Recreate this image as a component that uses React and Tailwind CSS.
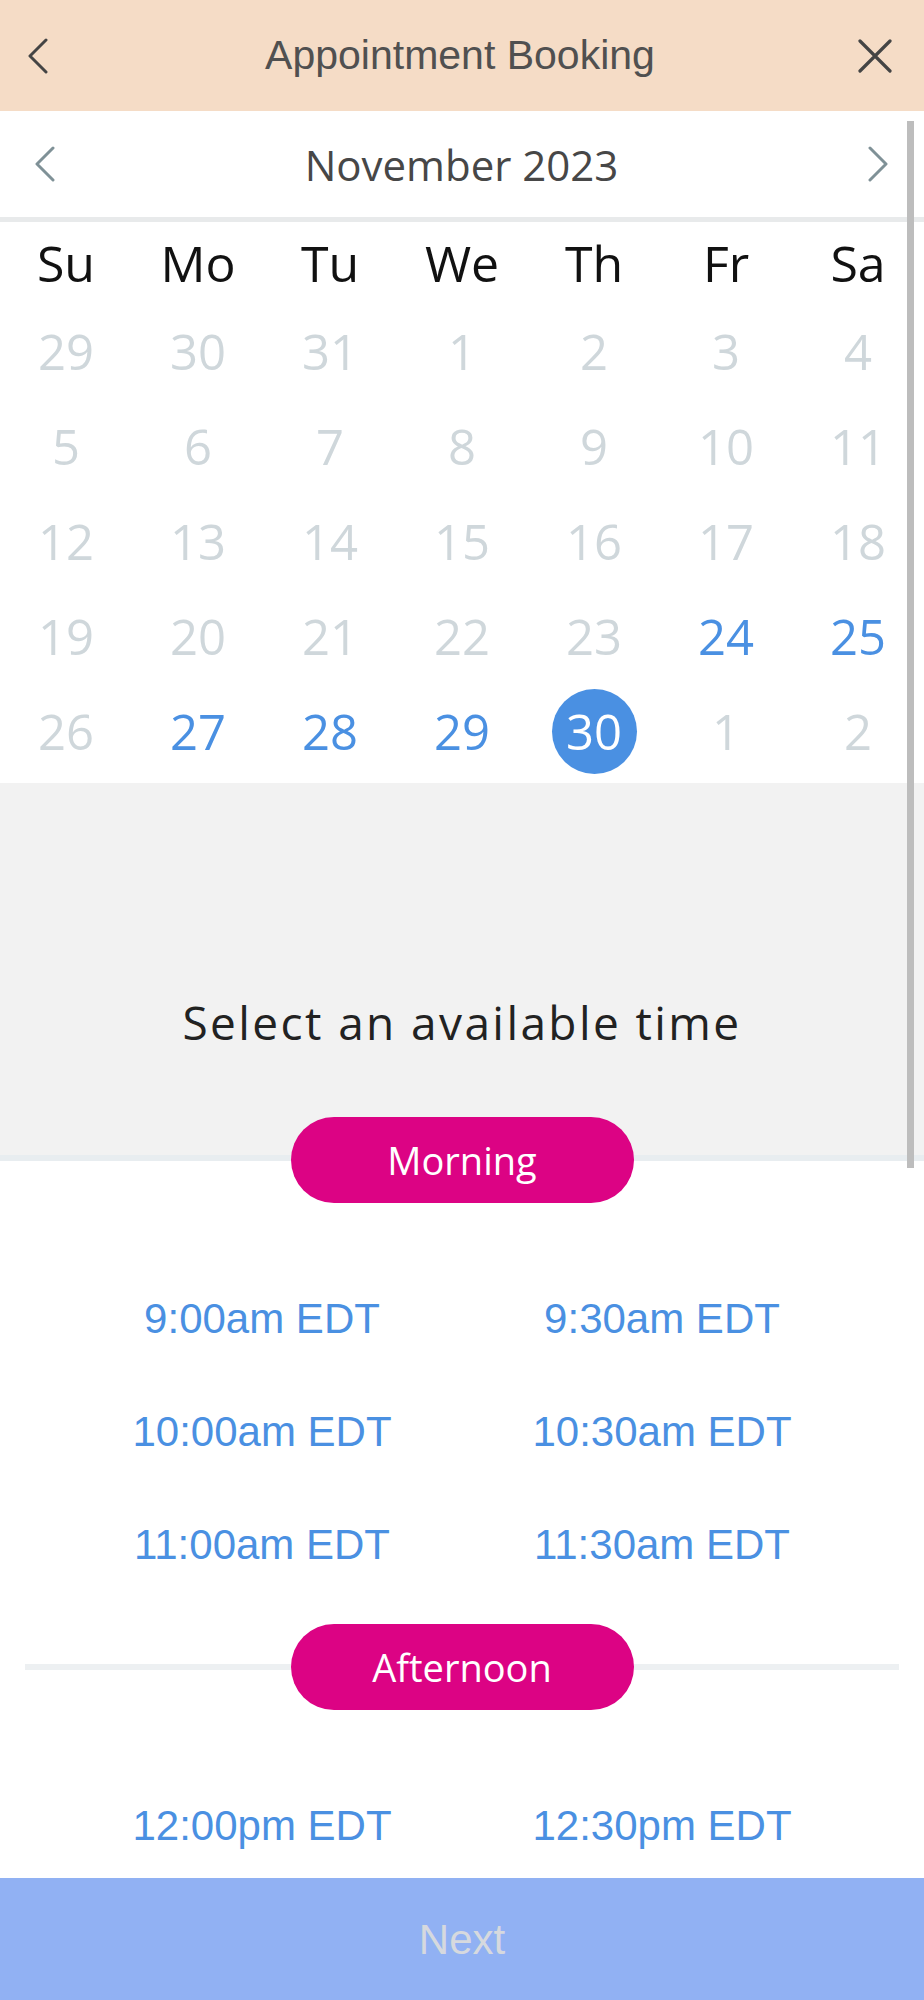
import { useState } from 'react';

const WEEKDAYS = ['Su', 'Mo', 'Tu', 'We', 'Th', 'Fr', 'Sa'];

// [day, state] state: 'off' = greyed out, 'open' = bookable
const WEEKS = [
  [[29, 'off'], [30, 'off'], [31, 'off'], [1, 'off'], [2, 'off'], [3, 'off'], [4, 'off']],
  [[5, 'off'], [6, 'off'], [7, 'off'], [8, 'off'], [9, 'off'], [10, 'off'], [11, 'off']],
  [[12, 'off'], [13, 'off'], [14, 'off'], [15, 'off'], [16, 'off'], [17, 'off'], [18, 'off']],
  [[19, 'off'], [20, 'off'], [21, 'off'], [22, 'off'], [23, 'off'], [24, 'open'], [25, 'open']],
  [[26, 'off'], [27, 'open'], [28, 'open'], [29, 'open'], [30, 'open'], [1, 'off'], [2, 'off']],
];

const MORNING = ['9:00am EDT', '9:30am EDT', '10:00am EDT', '10:30am EDT', '11:00am EDT', '11:30am EDT'];
const AFTERNOON = ['12:00pm EDT', '12:30pm EDT'];

const openSans = { fontFamily: '"Open Sans", "Noto Sans", sans-serif' };

function Chevron({ dir = 'left', className = '' }) {
  return (
    <svg viewBox="0 0 20 36" className={className} fill="none" stroke="currentColor" strokeWidth="3" strokeLinecap="round" strokeLinejoin="round">
      {dir === 'left' ? <path d="M18 2 L2 18 L18 34" /> : <path d="M2 2 L18 18 L2 34" />}
    </svg>
  );
}

function Pill({ label }) {
  return (
    <div
      className="w-[343px] h-[86px] shrink-0 rounded-full bg-[#dc0384] flex items-center justify-center text-white text-[38px]"
      style={openSans}
    >
      {label}
    </div>
  );
}

function TimeGrid({ times }) {
  return (
    <div className="grid grid-cols-2 px-[62px]">
      {times.map((t) => (
        <button
          key={t}
          className="h-[113px] flex items-center justify-center text-[42px] text-[#4a90e2] font-['Liberation_Sans',Arial,sans-serif]"
        >
          {t}
        </button>
      ))}
    </div>
  );
}

export default function App() {
  const [selected, setSelected] = useState('4-4');

  return (
    <div className="w-[924px] h-[2000px] flex flex-col bg-white overflow-hidden">
      {/* header */}
      <div className="h-[111px] shrink-0 bg-[#f5dcc6] flex items-center justify-between px-[28px]">
        <Chevron className="w-[20px] h-[36px] text-[#444]" />
        <h1 className="text-[41px] text-[#505050] font-['Liberation_Sans',Arial,sans-serif] ml-[14px]">
          Appointment Booking
        </h1>
        <svg viewBox="0 0 34 34" className="w-[34px] h-[34px] mr-[4px] text-[#444]" fill="none" stroke="currentColor" strokeWidth="3.2" strokeLinecap="round">
          <path d="M2 2 L32 32 M32 2 L2 32" />
        </svg>
      </div>

      <div className="relative flex-1 overflow-hidden">
        {/* month switcher */}
        <div className="h-[111px] flex items-center justify-between px-[35px] border-b-[5px] border-[#e8eaeb]">
          <Chevron className="w-[20px] h-[36px] text-[#7f9197]" />
          <span className="text-[42px] text-[#474747]" style={openSans}>November 2023</span>
          <Chevron dir="right" className="w-[20px] h-[36px] text-[#7f9197] mr-[1px]" />
        </div>

        {/* calendar */}
        <div className="pb-[4px]" style={openSans}>
          <div className="grid grid-cols-7 h-[82px] items-center">
            {WEEKDAYS.map((d) => (
              <div key={d} className="text-center text-[50px] text-[#111]">{d}</div>
            ))}
          </div>
          {WEEKS.map((week, wi) => (
            <div key={wi} className="grid grid-cols-7 h-[95px] items-center">
              {week.map(([day, state], di) => {
                const key = `${wi}-${di}`;
                const isSel = key === selected;
                return (
                  <div key={key} className="flex items-center justify-center">
                    <button
                      onClick={() => state === 'open' && setSelected(key)}
                      className={`w-[85px] h-[85px] rounded-full flex items-center justify-center text-[49px] ${
                        isSel ? 'bg-[#4a90e2] text-white' : state === 'open' ? 'text-[#4a90e2]' : 'text-[#cfd7db]'
                      }`}
                    >
                      {day}
                    </button>
                  </div>
                );
              })}
            </div>
          ))}
        </div>

        {/* time picker */}
        <div className="h-[378px] bg-[#f2f2f2] border-b-[6px] border-[#e8edf0] pt-[209px]">
          <p className="text-center text-[46px] leading-[60px] tracking-[2.4px] text-[#222]" style={openSans}>
            Select an available time
          </p>
        </div>
        <div className="relative z-10 -mt-[44px] flex justify-center">
          <Pill label="Morning" />
        </div>

        <div className="mt-[59px]">
          <TimeGrid times={MORNING} />
        </div>

        <div className="mt-[23px] flex items-center px-[25px]">
          <div className="flex-1 h-[6px] bg-[#edf0f2]" />
          <Pill label="Afternoon" />
          <div className="flex-1 h-[6px] bg-[#edf0f2]" />
        </div>

        <div className="mt-[59px]">
          <TimeGrid times={AFTERNOON} />
        </div>

        {/* overlay scrollbar */}
        <div className="absolute top-[10px] right-[10px] w-[7px] h-[1047px] bg-[#bdbdbd]" />
      </div>

      <button className="h-[122px] shrink-0 bg-[#91b1f3] flex items-center justify-center text-[42px] text-[#d6d9de] font-['Liberation_Sans',Arial,sans-serif]">
        Next
      </button>
    </div>
  );
}
